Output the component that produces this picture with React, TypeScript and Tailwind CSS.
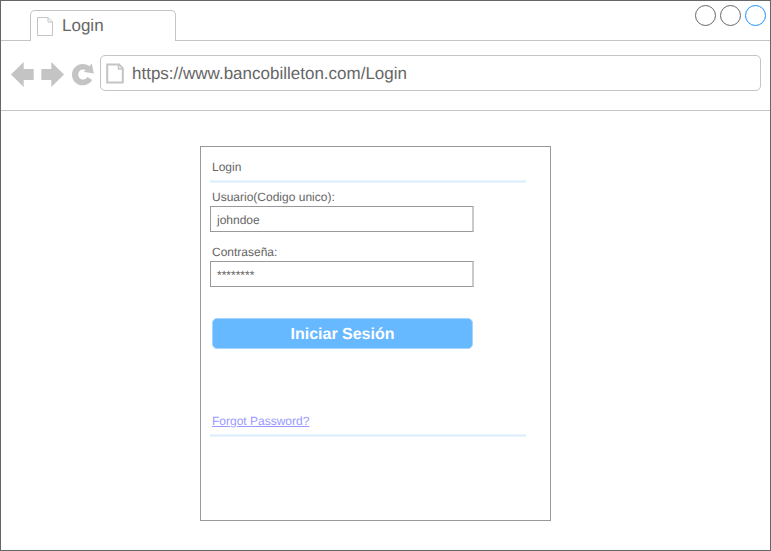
function TabPageIcon() {
  return (
    <svg className="mt-px h-[21px] w-[18px]" viewBox="0 0 18 21" fill="none" stroke="#c4c4c4" aria-hidden="true">
      <path d="M1.5 1.5H12L16.5 6V19.5H1.5Z M12 1.5V6H16.5" />
    </svg>
  );
}

function AddressPageIcon() {
  return (
    <svg className="h-[21px] w-[18px]" viewBox="0 0 18 21" fill="none" stroke="#c4c4c4" aria-hidden="true">
      <path d="M1.2 1.4H13L16.8 5.4V19.4H1.2Z" strokeWidth="2" />
      <path d="M12.5 1.4V6H16.8" strokeWidth="1.5" />
    </svg>
  );
}

function WindowButton({ color }: { color: string }) {
  return (
    <svg className="h-[21px] w-[21px]" viewBox="0 0 21 21" fill="none" aria-hidden="true">
      <circle cx="10.5" cy="10.5" r="10" stroke={color} />
    </svg>
  );
}

function TabStrip() {
  return (
    <header className="flex h-10 shrink-0 items-end">
      <div className="w-[29px] border-b border-[#c4c4c4]" />
      <div className="flex h-[31px] w-[146px] items-center rounded-t-[5px] border border-b-0 border-[#c4c4c4] pl-[5px]">
        <TabPageIcon />
        <span className="ml-2 text-[17px] leading-5">Login</span>
      </div>
      <div className="flex h-10 flex-1 justify-end gap-1 border-b border-[#c4c4c4] pr-1 pt-1">
        <WindowButton color="#666666" />
        <WindowButton color="#666666" />
        <WindowButton color="#1890ff" />
      </div>
    </header>
  );
}

function Toolbar() {
  return (
    <nav className="flex h-[70px] shrink-0 items-start border-b border-[#c4c4c4] pl-[10px] pt-[14px]">
      <svg className="mt-[7px] h-[25px] w-[23px]" viewBox="0 0 23 25" fill="#c4c4c4" aria-label="Back">
        <path d="M0 12.5L12.7 0V7H22.7V18H12.7V25Z" />
      </svg>
      <svg className="ml-[7px] mt-[7px] h-[25px] w-[23px]" viewBox="0 0 23 25" fill="#c4c4c4" aria-label="Forward">
        <path d="M23 12.5L10.3 0V7H.3V18H10.3V25Z" />
      </svg>
      <svg className="ml-2 mt-2 h-[24px] w-[22px]" viewBox="0 0 22 24" fill="#c4c4c4" aria-label="Reload">
        <path d="M17.3 3.2L19.8 .4L21.8 10.4L11.4 8.8L13.9 7.6C10.1 5 6.3 7.8 6.3 11.7C6.3 16.9 12.4 18.2 15.4 13.9L20.3 17C14.2 26.4 0 22.7 0 11.7C0 2.3 10.4-2.1 17.3 3.2Z" />
      </svg>
      <div className="ml-[6px] flex h-9 w-[661px] items-center rounded-[5px] border border-[#c4c4c4] pl-[5px]">
        <AddressPageIcon />
        <span className="ml-2 pt-[2px] text-[17px] leading-5">https://www.bancobilleton.com/Login</span>
      </div>
    </nav>
  );
}

function Divider() {
  return <div className="h-[3px] w-[316px] border-y border-[#ebf5ff] bg-[#dcedfd]" />;
}

function Field({ label, value }: { label: string; value: string }) {
  return (
    <div>
      <div className="pl-[2px] text-xs leading-4">{label}</div>
      <div className="mt-px flex h-[26px] w-[264px] items-center border border-r-2 border-[#999999] border-r-[#cacaca] pl-[6px] pt-px text-xs">
        {value}
      </div>
    </div>
  );
}

export default function App() {
  return (
    <div
      className="flex h-[551px] w-[771px] flex-col border border-[#666666] bg-white font-['Liberation_Sans',Arial,sans-serif] text-[#666666] [text-rendering:geometricPrecision]"
    >
      <TabStrip />
      <Toolbar />
      <main className="pl-[199px] pt-[35px]">
        <section className="h-[375px] w-[351px] border border-[#999999] pl-[9px] pt-3">
          <h1 className="mb-[5px] pl-[2px] text-xs leading-4">Login</h1>
          <Divider />
          <div className="mt-[6px] flex flex-col gap-3">
            <Field label="Usuario(Codigo unico):" value="johndoe" />
            <Field label="Contraseña:" value="********" />
          </div>
          <button className="ml-[2px] mt-[31px] block h-[31px] w-[261px] rounded-[5px] border border-[#a3d5ff] bg-[#66b8ff] pt-[2px] text-base leading-6 font-bold text-white [text-rendering:geometricPrecision]">
            Iniciar Sesión
          </button>
          <div className="mb-[5px] mt-[64px] pl-[2px] text-xs leading-4">
            <a className="text-[#9999ff] underline">Forgot Password?</a>
          </div>
          <Divider />
        </section>
      </main>
    </div>
  );
}
